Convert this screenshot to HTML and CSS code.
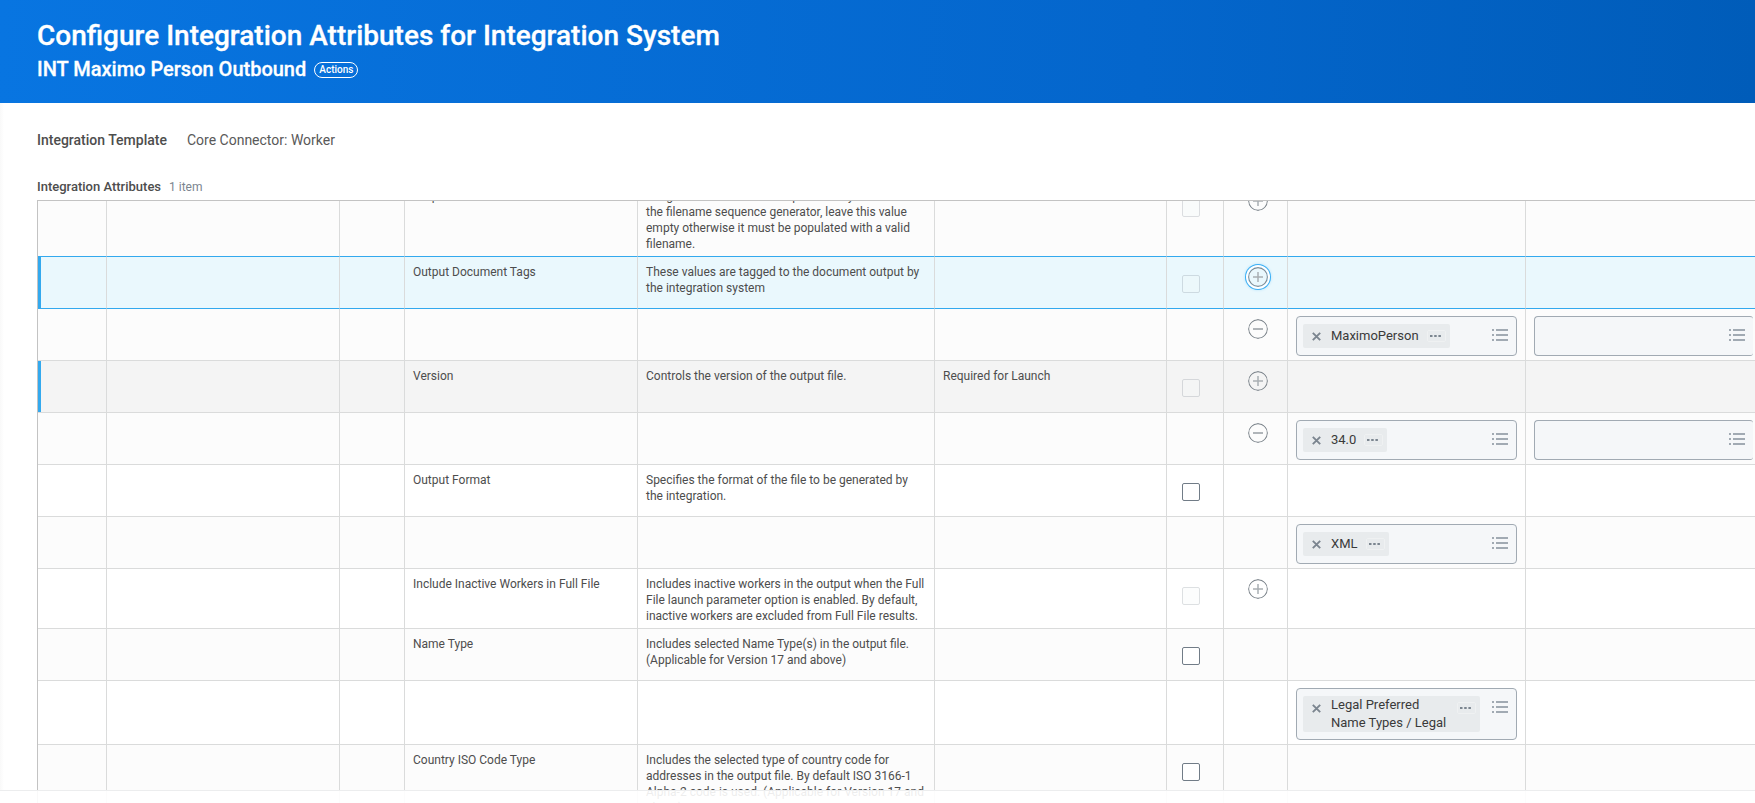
FILE: index.html
```html
<!DOCTYPE html>
<html lang="en">
<head>
<meta charset="utf-8">
<title>Configure Integration Attributes for Integration System</title>
<link rel="stylesheet" href="styles.css">
</head>
<body>
<svg class="defs" width="0" height="0" aria-hidden="true">
  <symbol id="plus" viewBox="0 0 20 20"><circle cx="10" cy="10" r="9.4" fill="none" stroke="#7f878e" stroke-width="1.1"/><path d="M5 9.25h10v1.5H5zM9.25 5h1.5v10h-1.5z" fill="#a9afb3"/></symbol>
  <symbol id="minus" viewBox="0 0 20 20"><circle cx="10" cy="10" r="9.4" fill="none" stroke="#7f878e" stroke-width="1.1"/><path d="M5 9h10v2H5z" fill="#b0b5b9"/></symbol>
  <symbol id="list" viewBox="0 0 16 12"><path d="M0 0h2v2H0zM4 0h12v2H4zM0 5h2v2H0zM4 5h12v2H4zM0 10h2v2H0zM4 10h12v2H4z" fill="#a1aab3"/></symbol>
  <symbol id="x" viewBox="0 0 9 9"><path d="M.8.8l7.4 7.4M8.2.8L.8 8.2" fill="none" stroke="#7b858f" stroke-width="1.9"/></symbol>
  <symbol id="dots" viewBox="0 0 11 2"><path d="M0 0h2.5v2H0zM4.2 0h2.5v2H4.2zM8.4 0h2.5v2H8.4z" fill="#7b858f"/></symbol>
</svg>
<header class="banner">
  <h1 class="title">Configure Integration Attributes for Integration System</h1>
  <div class="subtitle"><h2 class="name">INT Maximo Person Outbound</h2><button class="actions">Actions</button></div>
</header>
<main class="page">
  <div class="field"><span class="field-label">Integration Template</span><span class="field-value">Core Connector: Worker</span></div>
  <div class="caption"><span class="caption-title">Integration Attributes</span><span class="caption-count">1 item</span></div>
  <div class="grid">
    <div class="row first alt">
      <div></div><div></div><div></div>
      <div class="text">Output Filename</div>
      <div class="text">Integration filename will be provided by<br>the filename sequence generator, leave this value<br>empty otherwise it must be populated with a valid<br>filename.</div>
      <div></div>
      <div class="check"><i class="box off"></i></div>
      <div class="act"><svg class="round"><use href="#plus"/></svg></div>
      <div></div><div></div>
    </div>
    <div class="row selected">
      <div></div><div></div><div></div>
      <div class="text">Output Document Tags</div>
      <div class="text">These values are tagged to the document output by<br>the integration system</div>
      <div></div>
      <div class="check"><i class="box off"></i></div>
      <div class="act"><svg class="round focus"><use href="#plus"/></svg></div>
      <div></div><div></div>
    </div>
    <div class="row alt">
      <div></div><div></div><div></div><div></div><div></div><div></div><div></div>
      <div class="act"><svg class="round"><use href="#minus"/></svg></div>
      <div class="input"><div class="prompt"><span class="pill"><svg class="x"><use href="#x"/></svg><span>MaximoPerson</span><span class="more"><svg class="dots"><use href="#dots"/></svg></span></span><svg class="list"><use href="#list"/></svg></div></div>
      <div class="input last"><div class="prompt"><svg class="list"><use href="#list"/></svg></div></div>
    </div>
    <div class="row marked">
      <div></div><div></div><div></div>
      <div class="text">Version</div>
      <div class="text">Controls the version of the output file.</div>
      <div class="text">Required for Launch</div>
      <div class="check"><i class="box off"></i></div>
      <div class="act"><svg class="round"><use href="#plus"/></svg></div>
      <div></div><div></div>
    </div>
    <div class="row alt">
      <div></div><div></div><div></div><div></div><div></div><div></div><div></div>
      <div class="act"><svg class="round"><use href="#minus"/></svg></div>
      <div class="input"><div class="prompt"><span class="pill"><svg class="x"><use href="#x"/></svg><span>34.0</span><span class="more"><svg class="dots"><use href="#dots"/></svg></span></span><svg class="list"><use href="#list"/></svg></div></div>
      <div class="input last"><div class="prompt"><svg class="list"><use href="#list"/></svg></div></div>
    </div>
    <div class="row">
      <div></div><div></div><div></div>
      <div class="text">Output Format</div>
      <div class="text">Specifies the format of the file to be generated by<br>the integration.</div>
      <div></div>
      <div class="check"><i class="box"></i></div>
      <div></div><div></div><div></div>
    </div>
    <div class="row alt">
      <div></div><div></div><div></div><div></div><div></div><div></div><div></div><div></div>
      <div class="input"><div class="prompt"><span class="pill"><svg class="x"><use href="#x"/></svg><span>XML</span><span class="more"><svg class="dots"><use href="#dots"/></svg></span></span><svg class="list"><use href="#list"/></svg></div></div>
      <div></div>
    </div>
    <div class="row">
      <div></div><div></div><div></div>
      <div class="text">Include Inactive Workers in Full File</div>
      <div class="text">Includes inactive workers in the output when the Full<br>File launch parameter option is enabled. By default,<br>inactive workers are excluded from Full File results.</div>
      <div></div>
      <div class="check"><i class="box off"></i></div>
      <div class="act"><svg class="round"><use href="#plus"/></svg></div>
      <div></div><div></div>
    </div>
    <div class="row alt">
      <div></div><div></div><div></div>
      <div class="text">Name Type</div>
      <div class="text">Includes selected Name Type(s) in the output file.<br>(Applicable for Version 17 and above)</div>
      <div></div>
      <div class="check"><i class="box"></i></div>
      <div></div><div></div><div></div>
    </div>
    <div class="row">
      <div></div><div></div><div></div><div></div><div></div><div></div><div></div><div></div>
      <div class="input"><div class="prompt"><span class="pill wide"><svg class="x"><use href="#x"/></svg><span class="grow">Legal Preferred<br>Name Types / Legal</span><span class="more"><svg class="dots"><use href="#dots"/></svg></span></span><svg class="list"><use href="#list"/></svg></div></div>
      <div></div>
    </div>
    <div class="row alt">
      <div></div><div></div><div></div>
      <div class="text">Country ISO Code Type</div>
      <div class="text">Includes the selected type of country code for<br>addresses in the output file. By default ISO 3166-1<br>Alpha-2 code is used. (Applicable for Version 17 and<br>above)</div>
      <div></div>
      <div class="check"><i class="box"></i></div>
      <div></div><div></div><div></div>
    </div>
  </div>
</main>
<footer class="footer"></footer>
</body>
</html>
```

FILE: styles.css
```css
* { box-sizing: border-box; }

body {
  margin: 0;
  height: 803px;
  overflow: hidden;
  display: flex;
  flex-direction: column;
  position: relative;
  background: #fff;
  color: #4d4d4d;
  font-family: Roboto, "Liberation Sans", sans-serif;
}

.defs { position: absolute; }

.banner {
  flex: none;
  height: 103px;
  padding: 18px 37px 0;
  background: linear-gradient(92deg, #0875e1, #0466cc 65%, #005cb9);
  color: #fff;
}

.title { margin: 0; font-size: 28px; line-height: 36px; font-weight: 500; -webkit-text-stroke: .3px #fff; }
.subtitle { display: flex; align-items: center; gap: 8px; margin-top: 3px; }
.name { margin: 0; font-size: 20px; line-height: 24px; font-weight: 500; -webkit-text-stroke: .3px #fff; }

.actions {
  height: 16px;
  padding: 0 4px;
  margin-top: 2px;
  border: 1px solid #fff;
  border-radius: 8px;
  background: none;
  color: #fff;
  font: 500 10px/14px Roboto, sans-serif;
}

.page {
  flex: 1;
  min-height: 0;
  display: flex;
  flex-direction: column;
  padding: 27px 0 0 37px;
  background: linear-gradient(90deg, #f9f9f9, #fff 4px);
}

.field { display: flex; gap: 20px; font-size: 14px; line-height: 20px; }
.field-label { font-weight: 500; }
.field-value { color: #595959; }

.caption { display: flex; gap: 8px; margin-top: 27px; height: 23px; font-size: 13px; line-height: 20px; }
.caption-title { font-weight: 500; }
.caption-count { color: #7b858f; font-size: 12px; }

.grid {
  flex: 1;
  min-height: 0;
  overflow: hidden;
  border-top: 1px solid #c3c3c3;
  border-left: 1px solid #c3c3c3;
  font-size: 12px;
  line-height: 16px;
}

.row {
  display: grid;
  grid-template-columns: 69px 233px 65px 233px 297px 232px 57px 64px 238px 1fr;
  min-height: 52px;
  background: #fff;
  position: relative;
}

.row > div { border-right: 1px solid #dadbdb; border-bottom: 1px solid #dadbdb; }
.row > div:last-child { border-right: 0; }
.row.first { margin-top: -20px; }
.alt { background: #fcfcfc; }
.marked { background: #f4f4f4; }
.selected { background: #eaf8fd; }
.row.first > div, .row.selected > div { border-bottom-color: #33a9ee; }

.selected::before, .marked::before {
  content: "";
  position: absolute;
  left: 0;
  top: 0;
  bottom: 1px;
  width: 3px;
  background: #33a9ee;
}

.row > .text { padding: 7px 0 4px 8px; }
.check { padding: 18px 0 0 15px; }
.box { display: block; width: 18px; height: 18px; border: 1px solid #717c87; border-radius: 2px; background: #fff; }
.off { border-color: #7b858f; background: #f4fbf9; opacity: .25; }

.act { padding: 10px 0 0 24px; }
.round { display: block; width: 20px; height: 20px; border-radius: 50%; }
.focus { box-shadow: 0 0 0 2px #fff, 0 0 0 3px #38aef5, 0 0 3px 3px #b5e2fa; }

.row > .input { padding: 7px 8px 4px; }
.row > .last { padding-right: 2px; }
.prompt {
  display: flex;
  justify-content: space-between;
  align-items: flex-start;
  min-height: 40px;
  padding: 7px 8px 7px 6px;
  border: 1px solid #a1aab3;
  border-radius: 4px;
  background: #f5f7f9;
}
.last .prompt { border-right: 0; border-radius: 4px 3px 3px 4px; }

.pill {
  display: flex;
  align-items: flex-start;
  min-height: 24px;
  padding: 3px 5px 3px 9px;
  border-radius: 2px;
  background: #e8ebed;
  color: #3a3a3a;
  font-size: 13px;
  line-height: 18px;
}
.wide { width: 177px; padding-top: 0; padding-bottom: 0; }
.grow { flex: 1; }
.x { flex: none; width: 9px; height: 9px; margin: 5px 10px 0 0; }
.wide .x { margin-top: 8px; }
.more { flex: none; display: flex; align-items: center; justify-content: flex-start; width: 19px; height: 12px; padding-left: 2px; margin: 3px 0 0 8px; border: 1px solid #eff1f2; border-radius: 2px; }
.pill .more { margin-left: 8px; margin-right: -1px; }
.wide .more { margin-top: 6px; }
.dots { width: 11px; height: 2px; }
.list { width: 16px; height: 12px; margin: 5px 0 0 auto; }

.footer {
  position: absolute;
  left: 0;
  right: 0;
  bottom: 0;
  height: 13px;
  border-top: 1px solid #ecedee;
  background: rgba(255, 255, 255, .9);
}
```
